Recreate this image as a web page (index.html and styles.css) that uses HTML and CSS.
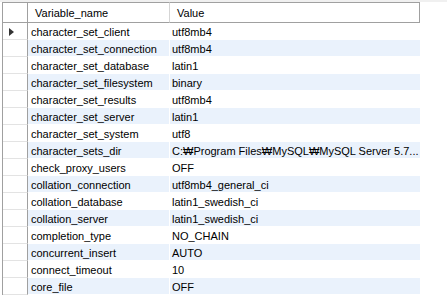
FILE: index.html
```html
<!DOCTYPE html>
<html lang="en">
<head>
    <meta charset="UTF-8">
    <title>Variables</title>
    <link rel="stylesheet" href="styles.css">
</head>
<body>
    <div class="topbar"></div>
    <div class="grid">
        <table class="result">
            <thead>
                <tr>
                    <th class="ind"></th>
                    <th class="name">Variable_name</th>
                    <th class="value">Value</th>
                </tr>
            </thead>
            <tbody>
                <tr><td class="ind"><span class="arrow"></span></td><td class="name">character_set_client</td><td class="value">utf8mb4</td></tr>
                <tr><td class="ind"></td><td class="name">character_set_connection</td><td class="value">utf8mb4</td></tr>
                <tr><td class="ind"></td><td class="name">character_set_database</td><td class="value">latin1</td></tr>
                <tr><td class="ind"></td><td class="name">character_set_filesystem</td><td class="value">binary</td></tr>
                <tr><td class="ind"></td><td class="name">character_set_results</td><td class="value">utf8mb4</td></tr>
                <tr><td class="ind"></td><td class="name">character_set_server</td><td class="value">latin1</td></tr>
                <tr><td class="ind"></td><td class="name">character_set_system</td><td class="value">utf8</td></tr>
                <tr><td class="ind"></td><td class="name">character_sets_dir</td><td class="value">C:&#8361;Program Files&#8361;MySQL&#8361;MySQL Server 5.7...</td></tr>
                <tr><td class="ind"></td><td class="name">check_proxy_users</td><td class="value">OFF</td></tr>
                <tr><td class="ind"></td><td class="name">collation_connection</td><td class="value">utf8mb4_general_ci</td></tr>
                <tr><td class="ind"></td><td class="name">collation_database</td><td class="value">latin1_swedish_ci</td></tr>
                <tr><td class="ind"></td><td class="name">collation_server</td><td class="value">latin1_swedish_ci</td></tr>
                <tr><td class="ind"></td><td class="name">completion_type</td><td class="value">NO_CHAIN</td></tr>
                <tr><td class="ind"></td><td class="name">concurrent_insert</td><td class="value">AUTO</td></tr>
                <tr><td class="ind"></td><td class="name">connect_timeout</td><td class="value">10</td></tr>
                <tr><td class="ind"></td><td class="name">core_file</td><td class="value">OFF</td></tr>
            </tbody>
        </table>
    </div>
</body>
</html>
```

FILE: styles.css
```css
* {
    margin: 0;
    padding: 0;
    box-sizing: border-box;
}

body {
    font-family: 'Liberation Sans', Arial, sans-serif;
    font-size: 11px;
    color: #000;
    background-color: #fff;
}

.topbar {
    height: 2px;
    background-color: #f0f0f0;
}

.grid {
    margin-left: 2px;
    width: 418px;
    border-left: 1px solid #a0a0a0;
}

.result {
    width: 417px;
    border-collapse: separate;
    border-spacing: 0;
    table-layout: fixed;
}

/* Header row */
.result th {
    height: 21px;
    font-weight: normal;
    text-align: left;
    border-top: 1px solid #a0a0a0;
    border-bottom: 1px solid #a0a0a0;
    border-right: 1px solid #d5d5d5;
    background-color: #fff;
    padding-left: 7px;
    white-space: nowrap;
}

.result th.ind {
    border-right: 1px solid #a0a0a0;
}

.result th.value {
    border-right: 1px solid #a0a0a0;
}

/* Data rows */
.result td {
    height: 17px;
    line-height: 14px;
    border-bottom: 1px solid #fff;
    white-space: nowrap;
    overflow: hidden;
    padding-left: 3px;
    padding-top: 2px;
    vertical-align: top;
}

.result tbody tr:nth-child(even) td {
    background-color: #eaf2fc;
}

.result tbody tr td.ind {
    background-color: #fff;
    border-bottom: 1px solid #e3e3e3;
    border-right: 1px solid #a0a0a0;
    padding: 0;
    position: relative;
}

.ind {
    width: 25px;
}

.name {
    width: 142px;
    border-right: 1px solid #fff;
}

.result td.value {
    padding-left: 2px;
}

.arrow {
    position: absolute;
    left: 6px;
    top: 5px;
    width: 0;
    height: 0;
    border-top: 4px solid transparent;
    border-bottom: 4px solid transparent;
    border-left: 5px solid #333;
}
```
